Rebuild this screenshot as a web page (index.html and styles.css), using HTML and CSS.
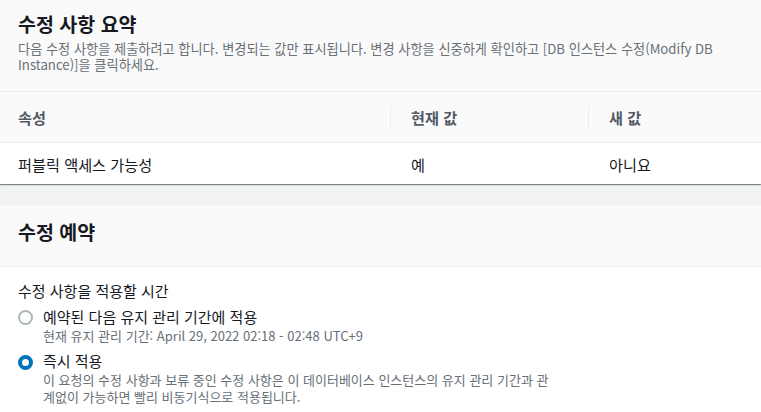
FILE: index.html
```html
<!DOCTYPE html>
<html lang="ko">
<head>
    <meta charset="UTF-8">
    <meta name="viewport" content="width=device-width, initial-scale=1.0">
    <title>DB 인스턴스 수정</title>
    <link rel="stylesheet" href="styles.css">
</head>
<body>
    <section class="card">
        <div class="card-header">
            <h2>수정 사항 요약</h2>
            <p class="card-desc">다음 수정 사항을 제출하려고 합니다. 변경되는 값만 표시됩니다. 변경 사항을 신중하게 확인하고 [DB 인스턴스 수정(Modify DB Instance)]을 클릭하세요.</p>
        </div>
        <div class="diff-table">
            <div class="row head">
                <div class="cell">속성</div>
                <div class="cell">현재 값</div>
                <div class="cell">새 값</div>
            </div>
            <div class="row">
                <div class="cell">퍼블릭 액세스 가능성</div>
                <div class="cell">예</div>
                <div class="cell">아니요</div>
            </div>
        </div>
    </section>

    <section class="card">
        <div class="card-header plain">
            <h2>수정 예약</h2>
        </div>
        <div class="card-body">
            <div class="field-label">수정 사항을 적용할 시간</div>
            <div class="radio-group">
                <label class="radio">
                    <span class="radio-dot"></span>
                    <span class="radio-text">
                        <span class="radio-label">예약된 다음 유지 관리 기간에 적용</span>
                        <span class="radio-desc">현재 유지 관리 기간: April 29, 2022 02:18 - 02:48 UTC+9</span>
                    </span>
                </label>
                <label class="radio checked">
                    <span class="radio-dot"></span>
                    <span class="radio-text">
                        <span class="radio-label">즉시 적용</span>
                        <span class="radio-desc">이 요청의 수정 사항과 보류 중인 수정 사항은 이 데이터베이스 인스턴스의 유지 관리 기간과 관계없이 가능하면 빨리 비동기식으로 적용됩니다.</span>
                    </span>
                </label>
            </div>
        </div>
    </section>
</body>
</html>
```

FILE: styles.css
```css
body {
    margin: 0;
    background-color: #f2f3f3;
    font-family: "Noto Sans CJK KR", "Noto Sans", sans-serif;
    color: #16191f;
}
.card {
    background-color: #fff;
    box-shadow: 0 1px 1px 0 rgba(0, 28, 36, 0.3), 1px 1px 1px 0 rgba(0, 28, 36, 0.15), -1px 1px 1px 0 rgba(0, 28, 36, 0.15);
    margin-bottom: 21px;
}
.card-header {
    background-color: #fafafa;
    padding: 13px 20px 18px 18px;
    border-bottom: 1px solid #eaeded;
}
.card-header.plain {
    padding: 16px 18px 23px;
}
.card-header h2 {
    margin: 0;
    font-size: 19.5px;
    line-height: 22px;
    font-weight: bold;
}
.card-desc {
    margin: 6px 0 0;
    font-size: 13.2px;
    line-height: 16px;
    color: #687078;
}
.diff-table .row {
    display: grid;
    grid-template-columns: 390px 198px 1fr;
    font-size: 15.2px;
    line-height: 20px;
}
.diff-table .row.head {
    background-color: #fafafa;
    border-bottom: 1px solid #eaeded;
    height: 50px;
    font-weight: bold;
    color: #545b64;
}
.diff-table .row .cell {
    display: flex;
    align-items: center;
    padding-left: 21px;
    position: relative;
}
.diff-table .row .cell:first-child {
    padding-left: 18px;
}
.diff-table .row.head .cell + .cell::before {
    content: "";
    position: absolute;
    left: 0;
    top: 13px;
    bottom: 14px;
    width: 1px;
    background-color: #eaeded;
}
.diff-table .row:not(.head) {
    height: 41px;
}
.card-body {
    padding: 14px 18px 8px;
}
.field-label {
    font-size: 15px;
    line-height: 20px;
    color: #16191f;
    margin-bottom: 6px;
}
.radio-group {
    display: flex;
    flex-direction: column;
    gap: 7px;
    max-width: 540px;
}
.radio {
    display: flex;
    gap: 10px;
}
.radio-dot {
    flex: none;
    width: 15px;
    height: 15px;
    margin-top: 3px;
    box-sizing: border-box;
    border: 2px solid #aab7b8;
    border-radius: 50%;
    background-color: #fff;
}
.radio.checked .radio-dot {
    border: 4px solid #0073bb;
    margin-top: 4px;
}
.radio-text {
    display: flex;
    flex-direction: column;
}
.radio-label {
    font-size: 15px;
    line-height: 20px;
}
.radio-desc {
    font-size: 13px;
    line-height: 17px;
    color: #687078;
}
```
